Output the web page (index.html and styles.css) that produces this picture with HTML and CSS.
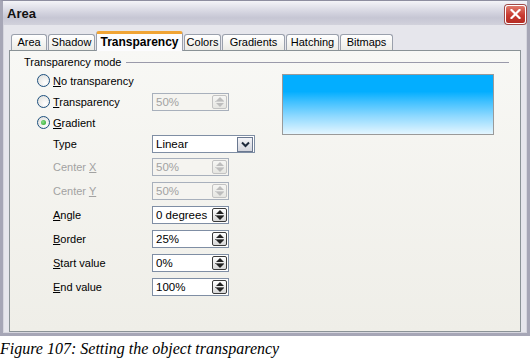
FILE: index.html
```html
<!DOCTYPE html>
<html lang="en">
<head>
    <meta charset="UTF-8">
    <title>Area</title>
    <link rel="stylesheet" href="styles.css">
</head>
<body>
    <div class="window">
        <div class="titlebar">
            <span class="title">Area</span>
            <span class="close">
                <svg width="11" height="10" viewBox="0 0 11 10"><path d="M1.5 1 L9.5 9 M9.5 1 L1.5 9" stroke="#fff" stroke-width="2.2" stroke-linecap="square"/></svg>
            </span>
        </div>
        <div class="body">
            <div class="tabs">
                <div class="tab w-area">Area</div>
                <div class="tab w-shadow">Shadow</div>
                <div class="tab active w-transp">Transparency</div>
                <div class="tab w-colors">Colors</div>
                <div class="tab w-grad">Gradients</div>
                <div class="tab w-hatch">Hatching</div>
                <div class="tab w-bitmap">Bitmaps</div>
            </div>
            <div class="panel">
                <div class="group-head">
                    <span>Transparency mode</span>
                    <span class="rule"></span>
                </div>
                <div class="content">
                    <div class="form">
                        <div class="radio-cell"><span class="radio"></span><span><u>N</u>o transparency</span></div>
                        <div></div>

                        <div class="radio-cell"><span class="radio"></span><span><u>T</u>ransparency</span></div>
                        <div class="spin disabled"><span class="val">50%</span><span class="spin-btn"></span></div>

                        <div class="radio-cell"><span class="radio checked"></span><span><u>G</u>radient</span></div>
                        <div></div>

                        <div class="sub-label type-row">Type</div>
                        <div class="select type-row"><span class="val">Linear</span>
                            <span class="drop-btn">
                                <svg width="9" height="7" viewBox="0 0 9 7"><path d="M1 1.5 L4.5 5 L8 1.5" fill="none" stroke="#1d2a3c" stroke-width="2"/></svg>
                            </span>
                        </div>

                        <div class="sub-label dim">Center <u>X</u></div>
                        <div class="spin disabled"><span class="val">50%</span><span class="spin-btn"></span></div>

                        <div class="sub-label dim">Center <u>Y</u></div>
                        <div class="spin disabled"><span class="val">50%</span><span class="spin-btn"></span></div>

                        <div class="sub-label"><u>A</u>ngle</div>
                        <div class="spin"><span class="val">0 degrees</span><span class="spin-btn"></span></div>

                        <div class="sub-label"><u>B</u>order</div>
                        <div class="spin"><span class="val">25%</span><span class="spin-btn"></span></div>

                        <div class="sub-label"><u>S</u>tart value</div>
                        <div class="spin"><span class="val">0%</span><span class="spin-btn"></span></div>

                        <div class="sub-label"><u>E</u>nd value</div>
                        <div class="spin"><span class="val">100%</span><span class="spin-btn"></span></div>
                    </div>
                    <div class="preview"></div>
                </div>
            </div>
        </div>
    </div>
    <p class="caption">Figure 107: Setting the object transparency</p>
</body>
</html>
```

FILE: styles.css
```css
* {
    margin: 0;
    padding: 0;
    box-sizing: border-box;
}
body {
    background: #fff;
    font-family: 'Liberation Sans', Arial, sans-serif;
    font-size: 11px;
    color: #000;
}
.window {
    width: 530px;
    height: 336px;
    display: flex;
    flex-direction: column;
    border: 3px solid #a6a6b6;
    border-top: 1px solid #8e8ea0;
    box-shadow: inset 1px 0 #d6d6de, inset -1px 0 #d6d6de, inset 0 -1px #d6d6de;
    background: #e6e6ec;
}
.titlebar {
    height: 24px;
    display: flex;
    align-items: center;
    justify-content: space-between;
    padding: 0 0 0 4px;
    background: linear-gradient(#f4f4f8, #dcdce6 35%, #c6c6d4 70%, #d2d2dc);
}
.title {
    font-family: 'Liberation Sans', Arial, sans-serif;
    font-weight: bold;
    font-size: 13px;
    color: #111;
}
.close {
    width: 21px;
    height: 19px;
    margin-right: 1px;
    margin-top: 2px;
    border: 1px solid #fff;
    border-radius: 3px;
    background: linear-gradient(#e07a6c, #c83a30 55%, #b52c24);
    display: flex;
    align-items: center;
    justify-content: center;
    box-shadow: 0 0 0 1px #a04a48;
}
.body {
    flex: 1;
    display: flex;
    flex-direction: column;
    padding: 6px 6px 1px 6px;
}
.tabs {
    display: flex;
    align-items: flex-end;
    height: 19px;
    padding-left: 2px;
    position: relative;
    z-index: 1;
}
.tab {
    height: 16px;
    margin-right: 1px;
    border: 1px solid #9aa0ac;
    border-bottom: none;
    border-radius: 3px 3px 0 0;
    background: linear-gradient(#fff, #ecebe6);
    text-align: center;
    line-height: 15px;
    font-size: 11px;
}
.tab.active {
    height: 20px;
    margin-bottom: -1px;
    border-top: 3px solid #f0a435;
    background: #fcfcfe;
    font-weight: bold;
    font-size: 12px;
    line-height: 16px;
}
.w-area { width: 36px; }
.w-shadow { width: 47px; }
.w-transp { width: 87px; }
.w-colors { width: 37px; }
.w-grad { width: 63px; }
.w-hatch { width: 53px; }
.w-bitmap { width: 53px; }
.panel {
    flex: 1;
    border: 1px solid #8a9296;
    background: linear-gradient(#f8f8f5, #efeee8);
    padding: 4px 11px 0 14px;
}
.group-head {
    display: flex;
    align-items: center;
    height: 14px;
    line-height: 14px;
}
.rule {
    flex: 1;
    height: 1px;
    margin-left: 5px;
    background: #9a9aaa;
}
.content {
    display: flex;
    margin-top: 1px;
}
.form {
    display: grid;
    grid-template-columns: 128px 106px;
    grid-template-rows: 21px 21px 21px 22px repeat(6, 24px);
    align-items: center;
    width: 240px;
}
.radio-cell {
    display: flex;
    align-items: center;
    gap: 3px;
    padding-left: 13px;
}
.radio {
    width: 13px;
    height: 13px;
    border: 1px solid #1c4f7e;
    border-radius: 50%;
    background: radial-gradient(circle at 65% 70%, #fff, #dcdcd8);
    display: flex;
    align-items: center;
    justify-content: center;
}
.radio.checked::after {
    content: '';
    width: 5px;
    height: 5px;
    border-radius: 50%;
    background: radial-gradient(circle at 40% 40%, #8be08b, #21a121);
}
.sub-label {
    padding-left: 29px;
}
.dim {
    color: #a2a2a2;
}
.spin,
.select {
    height: 18px;
    display: flex;
    align-items: center;
    justify-content: space-between;
    border: 1px solid #7f8ea4;
    background: #fff;
    padding: 0 1px 0 3px;
}
.spin {
    width: 77px;
}
.select {
    width: 103px;
}
.val {
    font-size: 11.5px;
}
.spin.disabled {
    border-color: #a8b0bc;
    background: #f5f4f0;
    color: #a2a2a2;
}
.spin-btn {
    width: 15px;
    height: 14px;
    border: 1px solid #3a3a3a;
    border-radius: 2px;
    background:
        linear-gradient(#6a6a6a, #6a6a6a) center / 9px 1px no-repeat,
        linear-gradient(#fff, #d8d8d8);
    position: relative;
}
.spin-btn::before,
.spin-btn::after {
    content: '';
    position: absolute;
    left: 3px;
    border-left: 4px solid transparent;
    border-right: 4px solid transparent;
}
.spin-btn::before {
    top: 1px;
    border-bottom: 4px solid #222;
}
.spin-btn::after {
    bottom: 1px;
    border-top: 4px solid #222;
}
.spin.disabled .spin-btn {
    border-color: #c2c2c2;
    background:
        linear-gradient(#cfcfcf, #cfcfcf) center / 9px 1px no-repeat,
        linear-gradient(#f6f6f4, #e6e6e2);
}
.spin.disabled .spin-btn::before {
    border-bottom-color: #bdbdbd;
}
.spin.disabled .spin-btn::after {
    border-top-color: #bdbdbd;
}
.drop-btn {
    width: 16px;
    height: 15px;
    border: 1px solid #6a7890;
    background: linear-gradient(#f4f4f8, #d4d6de);
    display: flex;
    align-items: center;
    justify-content: center;
}
.preview {
    width: 212px;
    height: 61px;
    margin: 4px 0 0 18px;
    border: 1px solid #9a9a9a;
    background: linear-gradient(#03aeff 0%, #03aeff 28%, #3fc0ff 45%, #8fd9ff 70%, #e4f6ff 100%);
}
.caption {
    margin-top: 4px;
    font-family: 'Liberation Serif', 'Times New Roman', serif;
    font-style: italic;
    font-size: 16px;
    line-height: 18px;
}
```
